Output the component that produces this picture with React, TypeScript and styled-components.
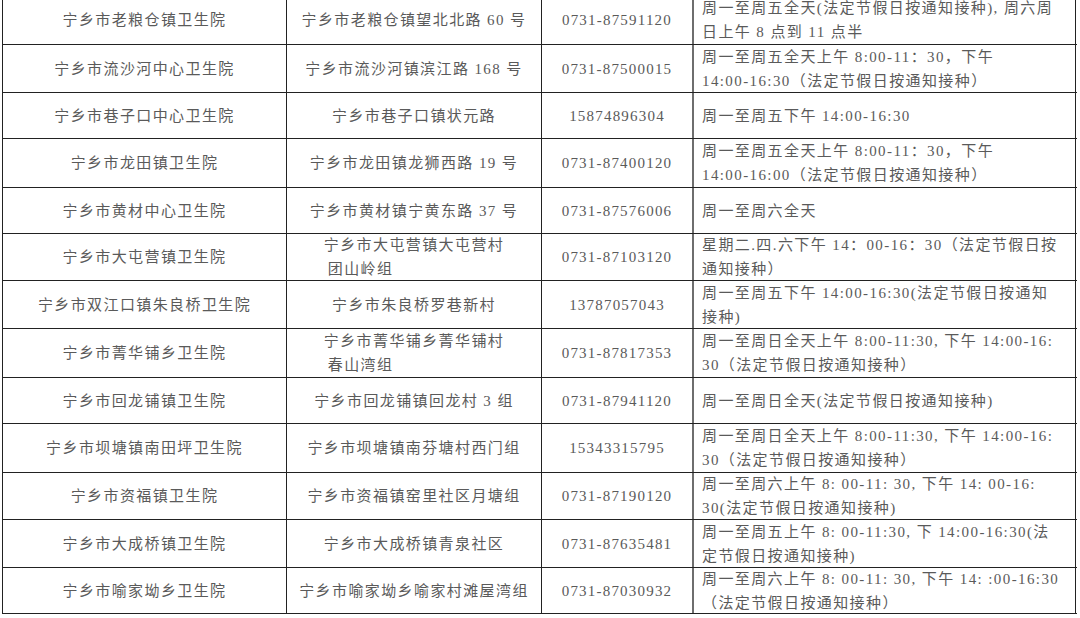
import styled, { createGlobalStyle } from "styled-components";

const GlobalStyle = createGlobalStyle`
  body {
    margin: 0;
    background: #ffffff;
    overflow: hidden;
  }
`;

type Clinic = {
  name: string;
  address: string[];
  phone: string;
  hours: string[];
  h: number;
};

const clinics: Clinic[] = [
  {
    name: "宁乡市老粮仓镇卫生院",
    address: ["宁乡市老粮仓镇望北北路 60 号"],
    phone: "0731-87591120",
    hours: ["周一至周五全天(法定节假日按通知接种), 周六周", "日上午 8 点到 11 点半"],
    h: 49,
  },
  {
    name: "宁乡市流沙河中心卫生院",
    address: ["宁乡市流沙河镇滨江路 168 号"],
    phone: "0731-87500015",
    hours: ["周一至周五全天上午 8:00-11：30，下午", "14:00-16:30（法定节假日按通知接种）"],
    h: 48,
  },
  {
    name: "宁乡市巷子口中心卫生院",
    address: ["宁乡市巷子口镇状元路"],
    phone: "15874896304",
    hours: ["周一至周五下午 14:00-16:30"],
    h: 46,
  },
  {
    name: "宁乡市龙田镇卫生院",
    address: ["宁乡市龙田镇龙狮西路 19 号"],
    phone: "0731-87400120",
    hours: ["周一至周五全天上午 8:00-11：30，下午", "14:00-16:00（法定节假日按通知接种）"],
    h: 49,
  },
  {
    name: "宁乡市黄材中心卫生院",
    address: ["宁乡市黄材镇宁黄东路 37 号"],
    phone: "0731-87576006",
    hours: ["周一至周六全天"],
    h: 46,
  },
  {
    name: "宁乡市大屯营镇卫生院",
    address: ["宁乡市大屯营镇大屯营村", "团山岭组"],
    phone: "0731-87103120",
    hours: ["星期二.四.六下午 14：00-16：30（法定节假日按", "通知接种）"],
    h: 47,
  },
  {
    name: "宁乡市双江口镇朱良桥卫生院",
    address: ["宁乡市朱良桥罗巷新村"],
    phone: "13787057043",
    hours: ["周一至周五下午 14:00-16:30(法定节假日按通知", "接种)"],
    h: 48,
  },
  {
    name: "宁乡市菁华铺乡卫生院",
    address: ["宁乡市菁华铺乡菁华铺村", "春山湾组"],
    phone: "0731-87817353",
    hours: ["周一至周日全天上午 8:00-11:30, 下午 14:00-16:", "30（法定节假日按通知接种）"],
    h: 49,
  },
  {
    name: "宁乡市回龙铺镇卫生院",
    address: ["宁乡市回龙铺镇回龙村 3 组"],
    phone: "0731-87941120",
    hours: ["周一至周日全天(法定节假日按通知接种)"],
    h: 46,
  },
  {
    name: "宁乡市坝塘镇南田坪卫生院",
    address: ["宁乡市坝塘镇南芬塘村西门组"],
    phone: "15343315795",
    hours: ["周一至周日全天上午 8:00-11:30, 下午 14:00-16:", "30（法定节假日按通知接种）"],
    h: 49,
  },
  {
    name: "宁乡市资福镇卫生院",
    address: ["宁乡市资福镇窑里社区月塘组"],
    phone: "0731-87190120",
    hours: ["周一至周六上午 8: 00-11: 30, 下午 14: 00-16:", "30(法定节假日按通知接种)"],
    h: 47,
  },
  {
    name: "宁乡市大成桥镇卫生院",
    address: ["宁乡市大成桥镇青泉社区"],
    phone: "0731-87635481",
    hours: ["周一至周五上午 8: 00-11:30, 下 14:00-16:30(法", "定节假日按通知接种)"],
    h: 48,
  },
  {
    name: "宁乡市喻家坳乡卫生院",
    address: ["宁乡市喻家坳乡喻家村滩屋湾组"],
    phone: "0731-87030932",
    hours: ["周一至周六上午 8: 00-11: 30, 下午 14: :00-16:30", "（法定节假日按通知接种）"],
    h: 46,
  },
];

const App = () => {
  return (
    <>
      <GlobalStyle />
      <Page>
        <Table>
          {clinics.map((c) => (
            <Row key={c.name} $h={c.h}>
              <CenterCell>{c.name}</CenterCell>
              <CenterCell>
                <AddressBlock>
                  {c.address.map((line, i) => (
                    <Line key={i} $indent={i > 0}>
                      {line}
                    </Line>
                  ))}
                </AddressBlock>
              </CenterCell>
              <PhoneCell>{c.phone}</PhoneCell>
              <HoursCell>
                {c.hours.map((line, i) => (
                  <Line key={i}>{line}</Line>
                ))}
              </HoursCell>
            </Row>
          ))}
        </Table>
      </Page>
    </>
  );
};

const Page = styled.div`
  width: 1080px;
  height: 618px;
  overflow: hidden;
  background: #ffffff;
`;

const Table = styled.div`
  margin: -5px 0 0 2px;
  width: 1074px;
  border-left: 1px solid #222;
  border-top: 1px solid #222;
  font-family: "Liberation Serif", "Noto Sans CJK SC", serif;
  font-size: 15px;
  letter-spacing: 1.4px;
  color: #5a5a5a;
`;

const Row = styled.div<{ $h: number }>`
  display: grid;
  grid-template-columns: 284px 255px 152px 382px;
  height: ${(p) => p.$h}px;
  box-sizing: border-box;
  border-bottom: 1px solid #222;
`;

const Cell = styled.div`
  display: flex;
  align-items: center;
  box-sizing: border-box;
  border-right: 1px solid #222;
  white-space: nowrap;
  overflow: hidden;
  line-height: 24px;
`;

const CenterCell = styled(Cell)`
  justify-content: center;
`;

const PhoneCell = styled(CenterCell)`
  border-right: 2px solid #6e6e6e;
  letter-spacing: 1.2px;
`;

const HoursCell = styled(Cell)`
  flex-direction: column;
  align-items: flex-start;
  justify-content: center;
  padding-left: 8px;
`;

const AddressBlock = styled.div`
  text-align: left;
`;

const Line = styled.div<{ $indent?: boolean }>`
  padding-left: ${(p) => (p.$indent ? "4px" : "0")};
`;

export default App;
